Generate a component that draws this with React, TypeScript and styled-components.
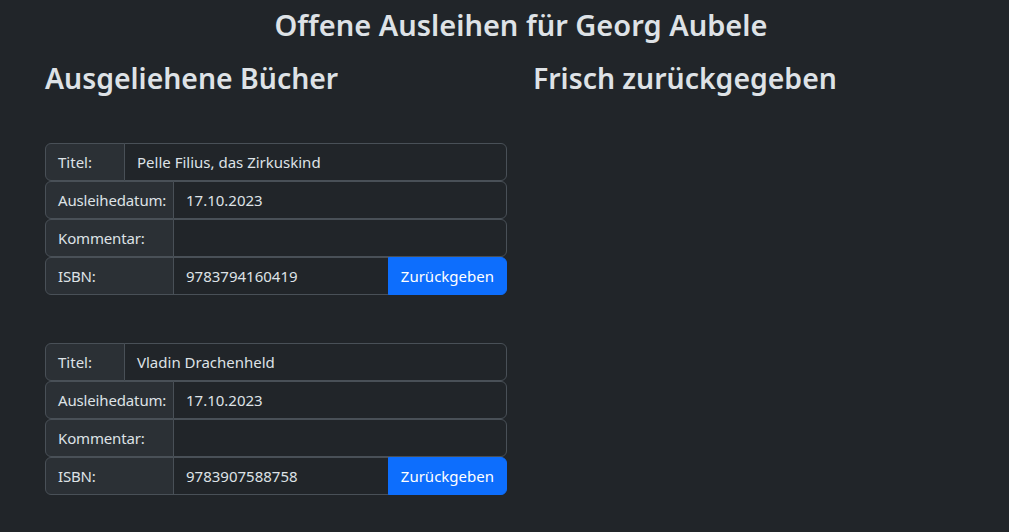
import React from "react";
import styled, { createGlobalStyle } from "styled-components";

const GlobalStyle = createGlobalStyle`
  html, body {
    margin: 0;
    padding: 0;
    background: #212529;
    color: #dee2e6;
    font-family: "Noto Sans", "Open Sans", sans-serif;
  }
  * { box-sizing: border-box; }
`;

const Page = styled.div`
  min-height: 532px;
  background: #212529;
  padding-left: 33px;
`;

const Title = styled.h2`
  margin: 7px 0 0;
  text-align: center;
  font-size: 29px;
  line-height: 35px;
  font-weight: 600;
  color: #dee2e6;
`;

const Columns = styled.div`
  display: grid;
  grid-template-columns: 488px 488px;
  margin-top: 18px;
`;

const Column = styled.section`
  padding: 0 12px;
`;

const Heading = styled.h3`
  margin: 0;
  font-size: 28.4px;
  line-height: 37px;
  font-weight: 600;
  color: #dee2e6;
`;

const BookList = styled.div`
  display: flex;
  flex-direction: column;
  gap: 48px;
  margin-top: 46px;
  width: 462px;
`;

const Book = styled.div`
  display: flex;
  flex-direction: column;
`;

const InputGroup = styled.div`
  display: flex;
  height: 38px;
  font-size: 15px;
`;

const Label = styled.span<{ $w: number }>`
  flex: 0 0 ${(p) => p.$w}px;
  min-width: 0;
  display: flex;
  align-items: center;
  padding: 0 0 0 12px;
  background: #2b3035;
  border: 1px solid #495057;
  border-radius: 6px 0 0 6px;
  color: #dee2e6;
  white-space: nowrap;
  letter-spacing: ${(p) => (p.$w > 100 ? "-0.15px" : "0")};
`;

const Field = styled.span<{ $last: boolean }>`
  flex: 1;
  display: flex;
  align-items: center;
  padding: 0 12px;
  margin-left: -1px;
  background: #212529;
  border: 1px solid #495057;
  border-radius: ${(p) => (p.$last ? "0 6px 6px 0" : "0")};
  color: #dee2e6;
  white-space: nowrap;
`;

const ReturnButton = styled.button`
  flex: 0 0 119px;
  margin-left: -1px;
  padding: 0 12px;
  border: 1px solid #0d6efd;
  border-radius: 0 6px 6px 0;
  background: #0d6efd;
  color: #ffffff;
  font-family: inherit;
  font-size: 15px;
  cursor: pointer;
`;

type Row = { label: string; value: string; w: number; button?: boolean };

const books: { title: string; date: string; isbn: string }[] = [
  { title: "Pelle Filius, das Zirkuskind", date: "17.10.2023", isbn: "9783794160419" },
  { title: "Vladin Drachenheld", date: "17.10.2023", isbn: "9783907588758" },
];

function BookCard({ title, date, isbn }: { title: string; date: string; isbn: string }) {
  const rows: Row[] = [
    { label: "Titel:", value: title, w: 80 },
    { label: "Ausleihedatum:", value: date, w: 129 },
    { label: "Kommentar:", value: "", w: 129 },
    { label: "ISBN:", value: isbn, w: 129, button: true },
  ];
  return (
    <Book>
      {rows.map((r) => (
        <InputGroup key={r.label}>
          <Label $w={r.w}>{r.label}</Label>
          <Field $last={!r.button}>{r.value}</Field>
          {r.button && <ReturnButton>Zurückgeben</ReturnButton>}
        </InputGroup>
      ))}
    </Book>
  );
}

export default function App() {
  return (
    <Page>
      <GlobalStyle />
      <Title>Offene Ausleihen für Georg Aubele</Title>
      <Columns>
        <Column>
          <Heading>Ausgeliehene Bücher</Heading>
          <BookList>
            {books.map((b) => (
              <BookCard key={b.isbn} {...b} />
            ))}
          </BookList>
        </Column>
        <Column>
          <Heading>Frisch zurückgegeben</Heading>
        </Column>
      </Columns>
    </Page>
  );
}
